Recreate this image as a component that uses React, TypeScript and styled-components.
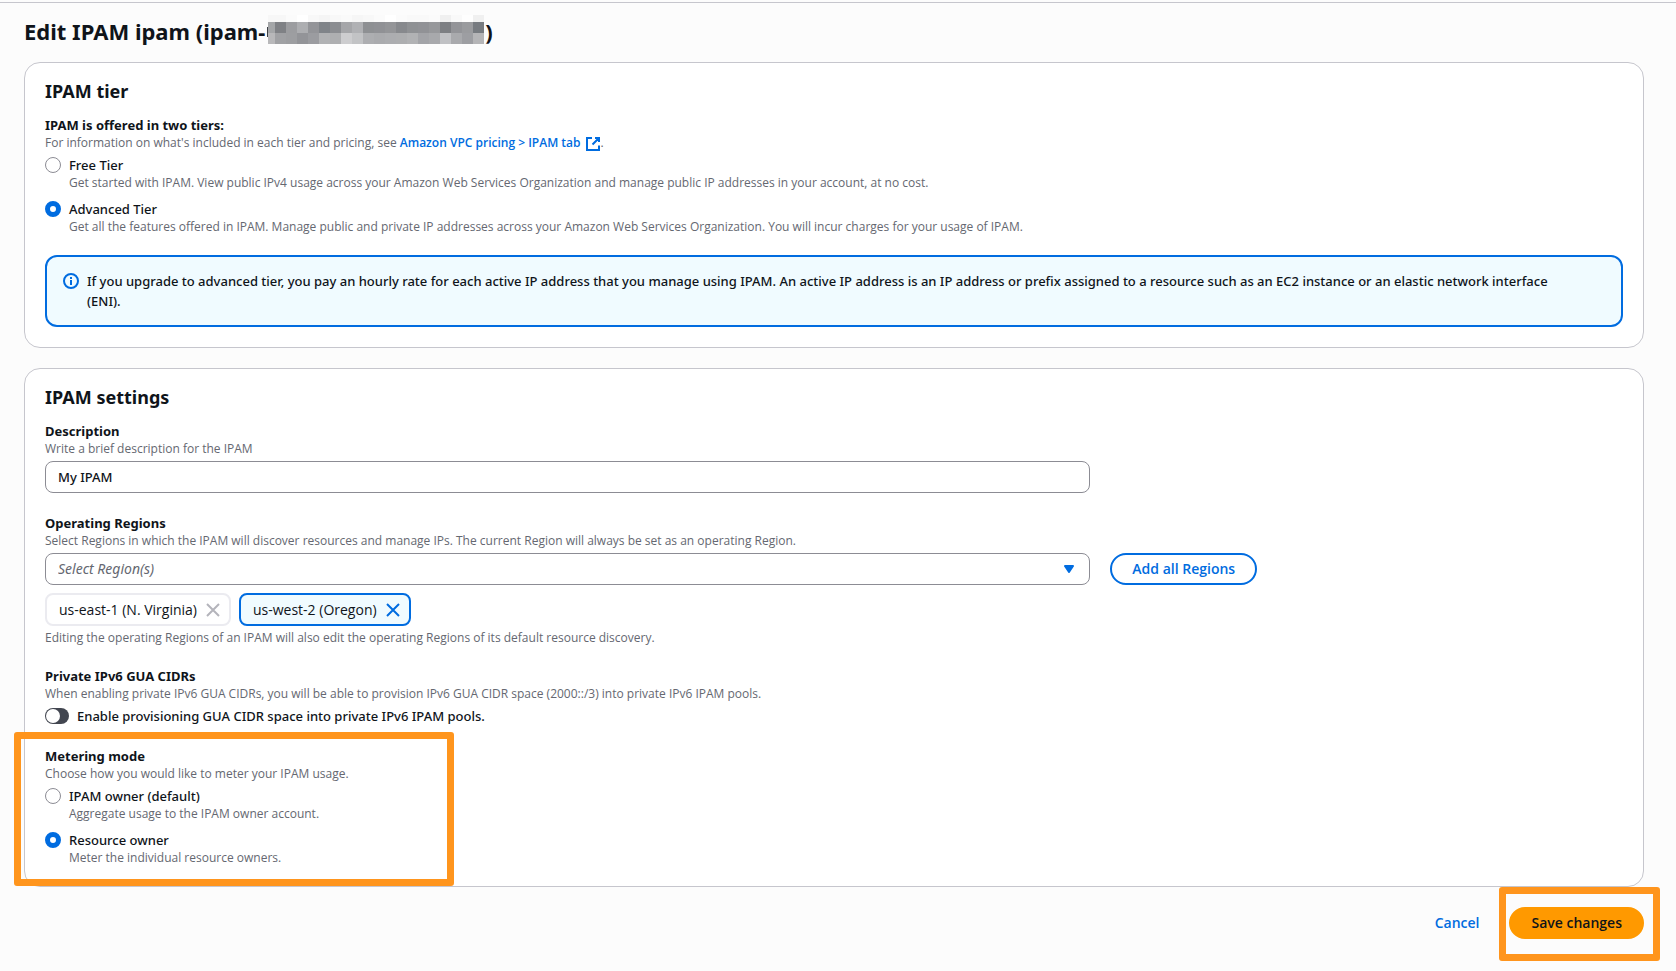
import React, { useState } from 'react';
import styled, { createGlobalStyle, css } from 'styled-components';

const color = {
  text: '#0f141a',
  muted: '#656871',
  blue: '#006ce0',
  paleBlue: '#f0fbff',
  page: '#fcfcfc',
  divider: '#c6c6cd',
  field: '#8c8c94',
  quiet: '#ebebf0',
  quietIcon: '#b4b4bb',
  toggle: '#424650',
  orange: '#ff9900',
  marker: '#ff951d',
};

const bodyFont = '"Noto Sans", "Open Sans", sans-serif';
const smallFont = '"Open Sans", "Noto Sans", sans-serif';

const GlobalStyle = createGlobalStyle`
  *, *::before, *::after { box-sizing: border-box; }
  body {
    margin: 0;
    background: ${color.page};
    color: ${color.text};
    font: 500 13px/20px ${bodyFont};
  }
  button, input, select { font: inherit; color: inherit; margin: 0; }
`;

const Page = styled.div`
  padding-top: 2px;
`;

const Main = styled.main`
  border-top: 1px solid ${color.divider};
  padding: 13px 32px 24px 24px;
  display: flex;
  flex-direction: column;
`;

const Title = styled.h1`
  margin: 0 0 16px;
  display: flex;
  align-items: flex-start;
  font-size: 22px;
  line-height: 30px;
  font-weight: 700;
`;

const Mosaic = styled.svg`
  display: block;
  margin: -1px 1px 0 2px;
`;

const Form = styled.form`
  display: flex;
  flex-direction: column;
  gap: 20px;
`;

const Card = styled.section`
  background: #fff;
  border: 1px solid ${color.divider};
  border-radius: 16px;
  padding: 16px 20px 20px;
`;

const CardTitle = styled.h2`
  margin: 0 0 12px;
  font-size: 18px;
  line-height: 24px;
  font-weight: 700;
`;

const Stack = styled.div`
  display: flex;
  flex-direction: column;
  gap: 20px;
`;

const Group = styled.fieldset`
  border: 0;
  margin: 0;
  padding: 0;
  min-width: 0;
`;

const labelText = css`
  display: block;
  padding: 0;
  font-size: 13px;
  line-height: 20px;
  font-weight: 700;
`;

const Legend = styled.legend`${labelText}`;
const FieldLabel = styled.label`${labelText}`;

const Hint = styled.p`
  margin: 0;
  font: 400 12px/16px ${smallFont};
  color: ${color.muted};
`;

const ExternalLink = styled.a`
  color: ${color.blue};
  font-weight: 600;
  text-decoration: none;
  svg {
    margin: -4px 0 -4px 4px;
    vertical-align: middle;
  }
`;

const Options = styled.div`
  margin-top: 4px;
  display: flex;
  flex-direction: column;
  gap: 8px;
`;

const Option = styled.div`
  display: grid;
  grid-template-columns: 16px 1fr;
  column-gap: 8px;
  align-items: center;
  ${Hint} { grid-column: 2; }
`;

const Radio = styled.input`
  appearance: none;
  width: 16px;
  height: 16px;
  border: 1px solid ${color.field};
  border-radius: 50%;
  background: #fff;
  &:checked { border: 5px solid ${color.blue}; }
`;

const Notice = styled.div`
  display: flex;
  align-items: flex-start;
  gap: 8px;
  padding: 14px 48px 14px 16px;
  border: 2px solid ${color.blue};
  border-radius: 12px;
  background: ${color.paleBlue};
  svg {
    flex: none;
    margin-top: 2px;
  }
`;

const Columns = styled.div`
  display: grid;
  grid-template-columns: calc((100% + 20px) * 2 / 3 - 20px) minmax(0, 1fr);
  column-gap: 20px;
  justify-items: start;
`;

const control = css`
  display: block;
  width: 100%;
  height: 32px;
  margin: 4px 0 0;
  padding: 0 12px;
  border: 1px solid ${color.field};
  border-radius: 8px;
  background: #fff;
`;

const TextInput = styled.input`
  ${control}
`;

const SelectWrap = styled.div`
  position: relative;
  width: 100%;
  svg {
    position: absolute;
    right: 16px;
    bottom: 12px;
    pointer-events: none;
  }
`;

const Select = styled.select`
  ${control}
  appearance: none;
  font-size: 14px;
  font-weight: 400;
  font-style: italic;
  color: ${color.muted};
`;

const PillButton = styled.button<{ $kind: 'normal' | 'link' | 'primary' }>`
  height: 32px;
  padding: 0 20px;
  border: 2px solid transparent;
  border-radius: 16px;
  background: transparent;
  color: ${color.blue};
  font: 600 14px/20px ${smallFont};
  white-space: nowrap;
  cursor: pointer;
  ${({ $kind }) => $kind === 'normal' && css`
    margin-top: 4px;
    border-color: ${color.blue};
    background: #fff;
  `}
  ${({ $kind }) => $kind === 'primary' && css`
    border-color: ${color.orange};
    background: ${color.orange};
    color: ${color.text};
  `}
`;

const Tokens = styled.ul`
  list-style: none;
  margin: 8px 0 4px;
  padding: 0;
  display: flex;
  gap: 8px;
`;

const Token = styled.li<{ $active?: boolean }>`
  display: flex;
  align-items: center;
  gap: 8px;
  height: 33px;
  padding: 0 8px 0 12px;
  border: 2px solid ${({ $active }) => ($active ? color.blue : color.quiet)};
  border-radius: 8px;
  background: ${({ $active }) => ($active ? color.paleBlue : '#fff')};
  font: 400 14px/20px ${smallFont};
`;

const TokenClose = styled.button<{ $active?: boolean }>`
  display: flex;
  padding: 0;
  border: 0;
  background: none;
  color: ${({ $active }) => ($active ? color.blue : color.quietIcon)};
  cursor: pointer;
`;

const ToggleRow = styled.label`
  margin-top: 4px;
  display: flex;
  align-items: center;
  gap: 8px;
`;

const Toggle = styled.input`
  appearance: none;
  display: flex;
  width: 24px;
  height: 16px;
  padding: 1px;
  border-radius: 8px;
  background: ${color.toggle};
  &::before {
    content: '';
    width: 14px;
    height: 14px;
    border-radius: 50%;
    background: #fff;
  }
  &:checked {
    background: ${color.blue};
    justify-content: flex-end;
  }
`;

const marker = css`
  content: '';
  position: absolute;
  border: 7px solid ${color.marker};
  border-radius: 3px;
  pointer-events: none;
`;

const MarkedField = styled.div`
  position: relative;
  &::after {
    ${marker}
    top: -14px;
    bottom: -20px;
    left: -31px;
    width: 440px;
  }
`;

const Actions = styled.div`
  display: flex;
  justify-content: flex-end;
  gap: 8px;
`;

const MarkedAction = styled.div`
  position: relative;
  &::after {
    ${marker}
    top: -20px;
    right: -16px;
    bottom: -22px;
    left: -10px;
  }
`;

const mosaicTop = ['f7', 'f7', 'fb', 'ff', 'f8', 'f5', 'f8', 'fa', 'f6', 'f8', 'fb', 'ff', 'fb', 'f9', 'f9', 'fb', 'f0', 'f9', 'fe', 'f0'].map((v) => '#' + v + v + v);
const mosaicMid = ['#a4a6a8', '#7f8185', '#9c9da0', '#adaeb1', '#939498', '#808489', '#8b8d91', '#a5a6a9', '#b0b1b4', '#8e9093', '#909195', '#949598', '#87898d', '#8f9194', '#919296', '#97989b', '#7d7f83', '#939498', '#9a9b9e', '#777b80'];
const mosaicLow = ['#b8b8ba', '#a0a1a4', '#9d9ea1', '#939498', '#9b9ca0', '#b1b2b4', '#aeafb1', '#cdcdcf', '#c2c3c5', '#adaeb1', '#aaabae', '#acadb0', '#adaeb0', '#b1b2b4', '#a3a4a8', '#a8a9ac', '#c0c1c4', '#a9aaad', '#9d9ea2', '#b5b5b7'];

function RedactedId() {
  const rows = [
    { y: 0, h: 7, cells: mosaicTop },
    { y: 7, h: 11, cells: mosaicMid },
    { y: 18, h: 11, cells: mosaicLow },
  ];
  return (
    <Mosaic width="217" height="29" viewBox="0 0 217 29" shapeRendering="crispEdges" role="img" aria-label="Hidden ID">
      <rect x="0" y="12" width="1" height="10" fill="#3c4046" />
      {rows.map((row) =>
        row.cells.map((fill, i) => (
          <rect key={row.y + '-' + i} x={i === 0 ? 1 : 8 + (i - 1) * 11} y={row.y} width={i === 0 ? 7 : 11} height={row.h} fill={fill} />
        )),
      )}
    </Mosaic>
  );
}

const ExternalIcon = () => (
  <svg width="16" height="16" viewBox="0 0 16 16" fill="none" stroke="currentColor" strokeWidth="2" aria-hidden="true">
    <path d="M10 2h4v4M7.5 8.5 14 2M14 9.5V14H2V2h5" />
  </svg>
);

const InfoIcon = () => (
  <svg width="16" height="16" viewBox="0 0 16 16" fill="none" stroke={color.blue} strokeWidth="2" aria-hidden="true">
    <circle cx="8" cy="8" r="7" />
    <path d="M8 7v5M8 4v2" />
  </svg>
);

const CloseIcon = () => (
  <svg width="16" height="16" viewBox="0 0 16 16" fill="none" stroke="currentColor" strokeWidth="2" aria-hidden="true">
    <path d="m2 2 12 12M14 2 2 14" />
  </svg>
);

const CaretIcon = () => (
  <svg width="10" height="8" viewBox="0 0 10 8" aria-hidden="true">
    <path d="M1 1h8L5 7Z" fill={color.blue} stroke={color.blue} strokeWidth="2" strokeLinejoin="round" />
  </svg>
);

type Choice = { id: string; label: string; hint: string };

const tiers: Choice[] = [
  { id: 'free', label: 'Free Tier', hint: 'Get started with IPAM. View public IPv4 usage across your Amazon Web Services Organization and manage public IP addresses in your account, at no cost.' },
  { id: 'advanced', label: 'Advanced Tier', hint: 'Get all the features offered in IPAM. Manage public and private IP addresses across your Amazon Web Services Organization. You will incur charges for your usage of IPAM.' },
];

const meteringModes: Choice[] = [
  { id: 'ipam-owner', label: 'IPAM owner (default)', hint: 'Aggregate usage to the IPAM owner account.' },
  { id: 'resource-owner', label: 'Resource owner', hint: 'Meter the individual resource owners.' },
];

function RadioOptions({ name, choices, initial }: { name: string; choices: Choice[]; initial: string }) {
  const [value, setValue] = useState(initial);
  return (
    <Options>
      {choices.map((c) => (
        <Option key={c.id}>
          <Radio type="radio" id={c.id} name={name} checked={value === c.id} onChange={() => setValue(c.id)} aria-describedby={c.id + '-hint'} />
          <label htmlFor={c.id}>{c.label}</label>
          <Hint id={c.id + '-hint'}>{c.hint}</Hint>
        </Option>
      ))}
    </Options>
  );
}

export default function App() {
  return (
    <Page>
      <GlobalStyle />
      <Main>
        <Title>
          Edit IPAM ipam (ipam-
          <RedactedId />)
        </Title>
        <Form onSubmit={(e) => e.preventDefault()}>
          <Card>
            <CardTitle>IPAM tier</CardTitle>
            <Stack>
              <Group>
                <Legend>IPAM is offered in two tiers:</Legend>
                <Hint>
                  For information on what's included in each tier and pricing, see{' '}
                  <ExternalLink href="#pricing">Amazon VPC pricing &gt; IPAM tab<ExternalIcon /></ExternalLink>.
                </Hint>
                <RadioOptions name="tier" choices={tiers} initial="advanced" />
              </Group>
              <Notice>
                <InfoIcon />
                <span>
                  If you upgrade to advanced tier, you pay an hourly rate for each active IP address that you manage using IPAM. An active IP address is an IP address or prefix assigned to a resource such as an EC2 instance or an elastic network interface (ENI).
                </span>
              </Notice>
            </Stack>
          </Card>

          <Card>
            <CardTitle>IPAM settings</CardTitle>
            <Stack>
              <div>
                <FieldLabel htmlFor="description">Description</FieldLabel>
                <Hint>Write a brief description for the IPAM</Hint>
                <Columns>
                  <TextInput id="description" type="text" defaultValue="My IPAM" />
                </Columns>
              </div>

              <div>
                <FieldLabel htmlFor="regions">Operating Regions</FieldLabel>
                <Hint>Select Regions in which the IPAM will discover resources and manage IPs. The current Region will always be set as an operating Region.</Hint>
                <Columns>
                  <SelectWrap>
                    <Select id="regions" defaultValue="">
                      <option value="">Select Region(s)</option>
                      <option value="us-east-1">us-east-1 (N. Virginia)</option>
                      <option value="us-west-2">us-west-2 (Oregon)</option>
                    </Select>
                    <CaretIcon />
                  </SelectWrap>
                  <PillButton type="button" $kind="normal">Add all Regions</PillButton>
                </Columns>
                <Tokens>
                  <Token>
                    us-east-1 (N. Virginia)
                    <TokenClose type="button" aria-label="Remove us-east-1"><CloseIcon /></TokenClose>
                  </Token>
                  <Token $active>
                    us-west-2 (Oregon)
                    <TokenClose type="button" $active aria-label="Remove us-west-2"><CloseIcon /></TokenClose>
                  </Token>
                </Tokens>
                <Hint>Editing the operating Regions of an IPAM will also edit the operating Regions of its default resource discovery.</Hint>
              </div>

              <Group>
                <Legend>Private IPv6 GUA CIDRs</Legend>
                <Hint>When enabling private IPv6 GUA CIDRs, you will be able to provision IPv6 GUA CIDR space (2000::/3) into private IPv6 IPAM pools.</Hint>
                <ToggleRow>
                  <Toggle type="checkbox" role="switch" />
                  Enable provisioning GUA CIDR space into private IPv6 IPAM pools.
                </ToggleRow>
              </Group>

              <MarkedField>
                <Group>
                  <Legend>Metering mode</Legend>
                  <Hint>Choose how you would like to meter your IPAM usage.</Hint>
                  <RadioOptions name="metering" choices={meteringModes} initial="resource-owner" />
                </Group>
              </MarkedField>
            </Stack>
          </Card>

          <Actions>
            <PillButton type="button" $kind="link">Cancel</PillButton>
            <MarkedAction>
              <PillButton type="submit" $kind="primary">Save changes</PillButton>
            </MarkedAction>
          </Actions>
        </Form>
      </Main>
    </Page>
  );
}
